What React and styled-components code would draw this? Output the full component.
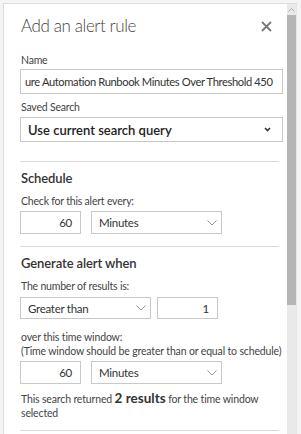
import styled, { createGlobalStyle } from "styled-components";

const Global = createGlobalStyle`
  html, body { margin: 0; padding: 0; background: #f4f4f4; }
  body { font-family: Lato, "Noto Sans", sans-serif; color: #333; }
`;

const Frame = styled.div`
  width: 301px;
  height: 434px;
  box-sizing: border-box;
  padding: 3px 4px 0 3px;
  display: flex;
  overflow: hidden;
`;

const Panel = styled.div`
  flex: 1;
  min-width: 0;
  display: flex;
  border: 1px solid #dcdcdc;
  border-bottom: none;
  border-right: none;
  background: #fff;
`;

const Content = styled.div`
  flex: 1;
  min-width: 0;
  padding: 0 4px 0 16px;
  display: flex;
  flex-direction: column;
  & > * { flex-shrink: 0; }
`;

const TitleRow = styled.div`
  display: flex;
  justify-content: space-between;
  align-items: center;
  height: 42px;
  padding: 0 11px 0 1px;
`;

const Title = styled.h1`
  margin: 0;
  font-size: 17px;
  font-weight: 300;
  letter-spacing: -0.4px;
  color: #444;
`;

const Close = styled.span`
  display: flex;
  margin-top: 2px;
`;

const Label = styled.div`
  font-size: 10.5px;
  letter-spacing: -0.2px;
  color: #444;
  line-height: 14px;
  padding-left: 1px;
  margin-top: ${(p) => p.$top || 0}px;
  margin-bottom: ${(p) => p.$bottom || 3}px;
`;

const Field = styled.div`
  box-sizing: border-box;
  height: ${(p) => p.$h || 24}px;
  width: ${(p) => (p.$w ? p.$w + "px" : "auto")};
  border: 1px solid #c8c8c8;
  display: flex;
  align-items: center;
  justify-content: ${(p) => (p.$num ? "flex-end" : p.$left ? "flex-start" : "space-between")};
  padding: 0 ${(p) => (p.$num ? 8 : p.$bold ? 11 : 4)}px 0 ${(p) => (p.$num ? 6 : p.$left ? 4 : 7)}px;
  font-size: ${(p) => (p.$bold ? 13 : 11.5)}px;
  font-weight: ${(p) => (p.$bold ? 600 : 400)};
  letter-spacing: ${(p) => (p.$bold ? 0 : -0.28)}px;
  color: ${(p) => (p.$bold ? "#222" : "#333")};
  white-space: nowrap;
  overflow: hidden;
`;

const NameText = styled.span`
  font-size: 11.2px;
  letter-spacing: -0.4px;
`;

const Row = styled.div`
  display: flex;
  gap: ${(p) => p.$gap || 10}px;
`;

const Divider = styled.div`
  height: 1px;
  background: #dadada;
  margin: ${(p) => p.$m};
`;

const Heading = styled.h2`
  margin: 0 0 7px;
  padding-left: 1px;
  font-size: 13px;
  font-weight: 600;
  letter-spacing: -0.1px;
  color: #333;
  line-height: 18px;
`;

const Note = styled.div`
  font-size: 10.5px;
  letter-spacing: -0.15px;
  color: #444;
  line-height: 14px;
  padding-left: 1px;
  margin-top: ${(p) => p.$top || 0}px;
  margin-bottom: ${(p) => p.$bottom || 0}px;
`;

const Big = styled.b`
  font-size: 13.5px;
  line-height: 12px;
  font-weight: 700;
  letter-spacing: 0;
  color: #333;
`;

const ScrollBar = styled.div`
  width: 9px;
  background: #e9e9e9;
  border-right: 1px solid #e1e4ea;
  display: flex;
  flex-direction: column;
`;

const Arrow = styled.div`
  height: 11px;
  display: flex;
  align-items: center;
  justify-content: center;
`;

const Thumb = styled.div`
  height: 290px;
  background: #b5b5b5;
`;

const Chevron = ({ bold }) =>
  bold ? (
    <svg width="7" height="5" viewBox="0 0 7 5">
      <path d="M1 1 L3.5 3.5 L6 1" fill="none" stroke="#333" strokeWidth="1.6" />
    </svg>
  ) : (
    <svg width="10" height="6" viewBox="0 0 10 6">
      <path d="M0.5 0.5 L5 5 L9.5 0.5" fill="none" stroke="#8a8a8a" strokeWidth="0.9" />
    </svg>
  );

const Select = ({ w, h, bold, children }) => (
  <Field $w={w} $h={h} $bold={bold}>
    <span>{children}</span>
    <Chevron bold={bold} />
  </Field>
);

export default function App() {
  return (
    <Frame>
      <Global />
      <Panel>
        <Content>
          <TitleRow>
            <Title>Add an alert rule</Title>
            <Close>
              <svg width="11" height="11" viewBox="0 0 11 11">
                <path d="M1 1 L10 10 M10 1 L1 10" stroke="#777" strokeWidth="1.8" />
              </svg>
            </Close>
          </TitleRow>

          <Label $top={7} $bottom={2}>Name</Label>
          <Field $h={25} $left>
            <NameText>ure Automation Runbook Minutes Over Threshold 450</NameText>
          </Field>

          <Label $top={6}>Saved Search</Label>
          <Select h={25} bold>Use current search query</Select>

          <Divider $m="19px 4px 7px 0" />
          <Heading>Schedule</Heading>
          <Label>Check for this alert every:</Label>
          <Row>
            <Field $w={61} $h={23} $num>60</Field>
            <Select w={131} h={23}>Minutes</Select>
          </Row>

          <Divider $m="12px 4px 7px 0" />
          <Heading>Generate alert when</Heading>
          <Label $bottom={4}>The number of results is:</Label>
          <Row $gap={6}>
            <Select w={131} h={22}>Greater than</Select>
            <Field $w={61} $h={22} $num>1</Field>
          </Row>

          <Note $top={11} $bottom={3}>
            over this time window:
            <br />
            (Time window should be greater than or equal to schedule)
          </Note>
          <Row>
            <Field $w={61} $h={23} $num>60</Field>
            <Select w={131} h={23}>Minutes</Select>
          </Row>
          <Note $top={8}>
            This search returned <Big>2 results</Big> for the time window
            <br />
            selected
          </Note>
          <Divider $m="10px 4px 0 0" />
        </Content>
        <ScrollBar>
          <Arrow>
            <svg width="7" height="4" viewBox="0 0 7 4">
              <path d="M0.5 3.5 L3.5 0.5 L6.5 3.5" fill="none" stroke="#aaa" strokeWidth="1" />
            </svg>
          </Arrow>
          <Thumb />
        </ScrollBar>
      </Panel>
    </Frame>
  );
}
